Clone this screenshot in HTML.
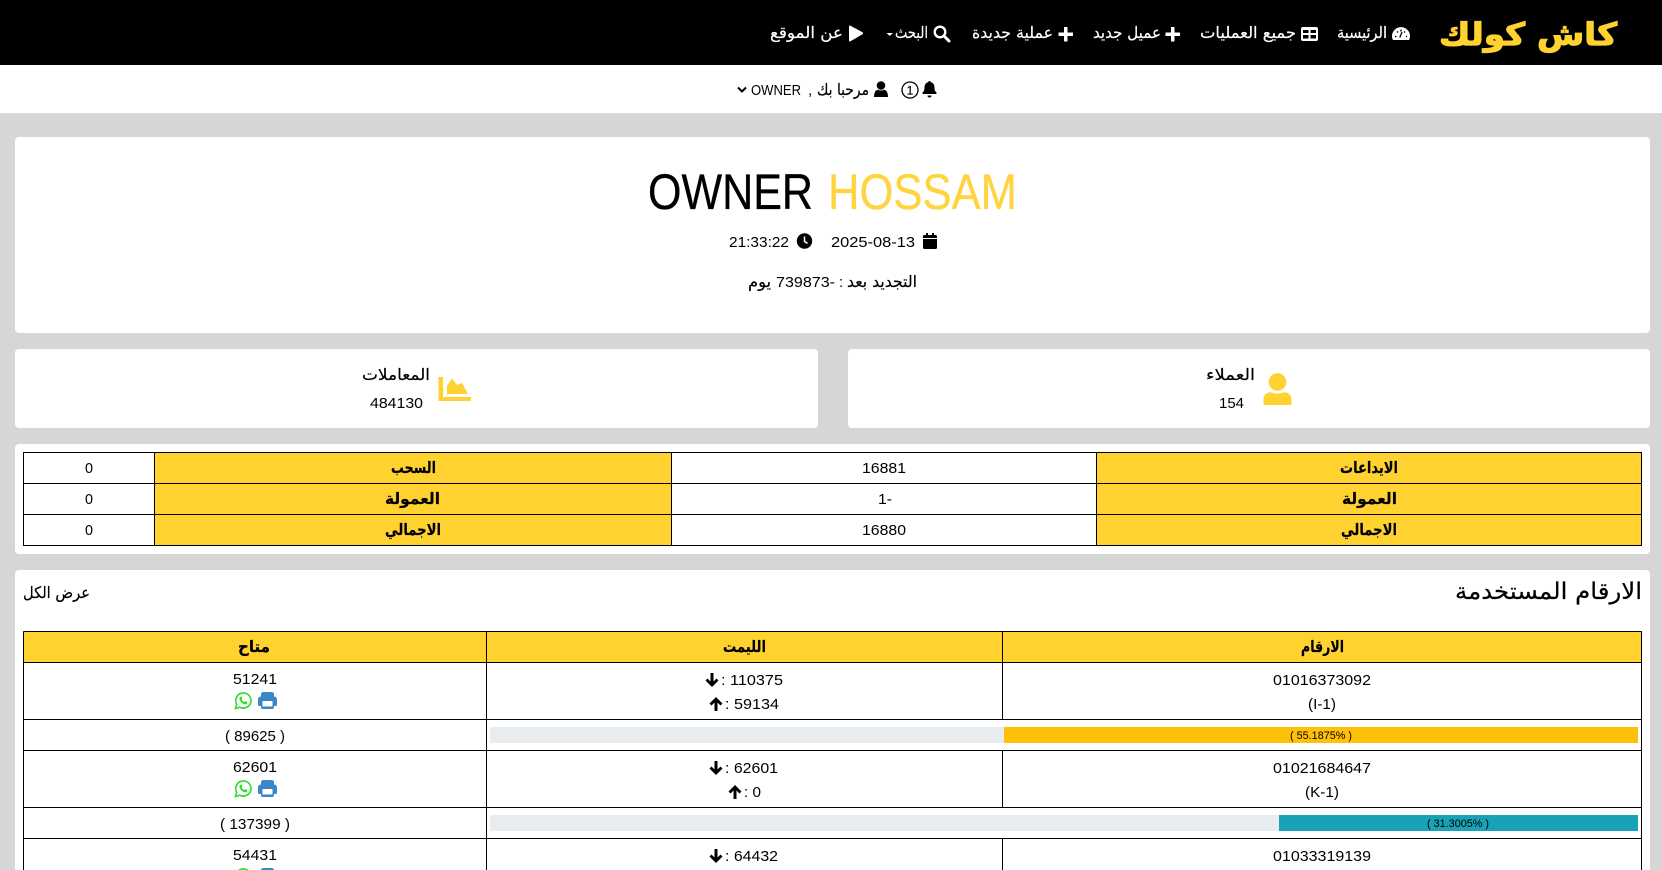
<!DOCTYPE html>
<html lang="ar">
<head>
<meta charset="utf-8">
<title>كاش كولك</title>
<style>
html,body{margin:0;padding:0;width:1662px;height:870px;overflow:hidden;background:#d6d6d6}
svg{position:absolute;left:0;top:0;display:block}
text{font-family:"Liberation Sans","DejaVu Sans",sans-serif;font-size:15px;fill:#000}
.ar{font-family:"DejaVu Sans","Liberation Sans",sans-serif;font-size:16px;stroke:#000;stroke-width:.2}
.b{font-weight:bold;font-size:16px}
.w{fill:#fff;stroke:#fff}
.s{font-size:11px}
</style>
</head>
<body>
<svg width="1662" height="870" viewBox="0 0 1662 870" xmlns="http://www.w3.org/2000/svg">
<!-- bars -->
<rect x="0" y="0" width="1662" height="65" fill="#000"/>
<rect x="0" y="65" width="1662" height="48" fill="#fff"/>
<!-- cards -->
<rect x="15" y="137" width="1635" height="196" rx="4" fill="#fff"/>
<rect x="15" y="349" width="803" height="79" rx="4" fill="#fff"/>
<rect x="848" y="349" width="802" height="79" rx="4" fill="#fff"/>
<rect x="15" y="444" width="1635" height="110" rx="4" fill="#fff"/>
<rect x="15" y="570" width="1635" height="310" rx="4" fill="#fff"/>

<!-- NAV -->
<text class="ar b" x="1439" y="45" textLength="178" lengthAdjust="spacingAndGlyphs" style="font-size:31px;fill:#ffd22f;stroke:#ffd22f;stroke-width:1.200">كاش كولك</text>
<path d="M1392.900 40A9 9 0 1 1 1409.100 40Z" fill="#fff"/>
<path d="M1395 36.500h1.500M1397 31.500l1 1M1401 29.500v2M1405 31.500l-1 1M1407 36.500h-1M1399.800 37.500l2.200-5.500" stroke="#000" stroke-width="1.300" fill="none"/>
<text class="ar w" x="1337" y="38" textLength="50" lengthAdjust="spacingAndGlyphs">الرئيسية</text>
<rect x="1301" y="27" width="17" height="14" rx="2" fill="#fff"/>
<path d="M1303 30h5.500v3h-5.500zM1310.500 30h5.500v3h-5.500zM1303 35h5.500v3.500h-5.500zM1310.500 35h5.500v3.500h-5.500z" fill="#000"/>
<text class="ar w" x="1200" y="38" textLength="96" lengthAdjust="spacingAndGlyphs">جميع العمليات</text>
<path d="M1171 27h3.500v5.500h5.500v3.500h-5.500v5.500h-3.500v-5.500h-5.500v-3.500h5.500z" fill="#fff"/>
<text class="ar w" x="1093" y="38" textLength="68" lengthAdjust="spacingAndGlyphs">عميل جديد</text>
<path d="M1064 27h3.500v5.500h5.500v3.500h-5.500v5.500h-3.500v-5.500h-5.500v-3.500h5.500z" fill="#fff"/>
<text class="ar w" x="972" y="38" textLength="81" lengthAdjust="spacingAndGlyphs">عملية جديدة</text>
<circle cx="940" cy="32" r="5.300" fill="none" stroke="#fff" stroke-width="2.400"/>
<path d="M944 36l5 5" stroke="#fff" stroke-width="3" stroke-linecap="round"/>
<text class="ar w" x="895" y="38" textLength="33" lengthAdjust="spacingAndGlyphs">البحث</text>
<path d="M886.500 33h6.500l-3.250 3z" fill="#fff"/>
<path d="M849 26.500q0-1.500 1.500-.7l12 6.500q1.200 1 0 2l-12 7q-1.500 .7-1.500-.7z" fill="#fff"/>
<text class="ar w" x="770" y="38" textLength="73" lengthAdjust="spacingAndGlyphs">عن الموقع</text>

<!-- SUBBAR -->
<path d="M929.500 81a1.300 1.300 0 0 1 1.300 1.300c2.700.6 3.700 2.800 3.700 5.500c0 2.700 1 3.800 2 5c.4.600 0 1.200-.6 1.200h-12.800c-.6 0-1-.6-.6-1.200c1-1.200 2-2.300 2-5c0-2.700 1-4.900 3.700-5.500a1.300 1.300 0 0 1 1.300-1.300zM927.500 95.500h4a2 2 0 0 1-4 0z" fill="#000"/>
<circle cx="910" cy="90" r="8" fill="none" stroke="#000" stroke-width="1.300"/>
<text x="910" y="94.500" text-anchor="middle" style="font-size:12px;stroke:#000;stroke-width:.2">1</text>
<circle cx="881" cy="85.500" r="4.300" fill="#000"/>
<path d="M874 97c0-5 2-7 4-7.200c2 1 4 1 6 0c2 .2 4 2.200 4 7.200z" fill="#000"/>
<text class="ar" x="817" y="95" textLength="52" lengthAdjust="spacingAndGlyphs">مرحبا بك</text>
<text x="808" y="95">,</text>
<text x="751" y="95" textLength="50" lengthAdjust="spacingAndGlyphs">OWNER</text>
<path d="M738 87.500l4 4l4-4" fill="none" stroke="#000" stroke-width="2"/>

<!-- HERO -->
<text x="648" y="209" textLength="165" lengthAdjust="spacingAndGlyphs" style="font-size:50px;stroke:#000;stroke-width:.3">OWNER</text>
<text x="828" y="209" textLength="189" lengthAdjust="spacingAndGlyphs" style="font-size:50px;fill:#ffd43f;stroke:#ffd43f;stroke-width:.3">HOSSAM</text>
<path d="M923 239h14v8.500a1.500 1.500 0 0 1-1.500 1.500h-11a1.500 1.500 0 0 1-1.500-1.500zM924.500 235h1.500v-2h2v2h4v-2h2v2h1.500a1.500 1.500 0 0 1 1.500 1.500v1.500h-14v-1.500a1.500 1.500 0 0 1 1.500-1.500z" fill="#000"/>
<text x="831" y="247" textLength="84" lengthAdjust="spacingAndGlyphs">2025-08-13</text>
<circle cx="804.500" cy="241" r="7.700" fill="#000"/>
<path d="M804.500 236.500v5l3 2" fill="none" stroke="#fff" stroke-width="1.500"/>
<text x="729" y="247" textLength="60" lengthAdjust="spacingAndGlyphs">21:33:22</text>
<text class="ar" x="847" y="287" textLength="70" lengthAdjust="spacingAndGlyphs">التجديد بعد</text>
<text x="839" y="287">:</text>
<text x="776" y="287" textLength="59" lengthAdjust="spacingAndGlyphs">739873-</text>
<text class="ar" x="748" y="287" textLength="23" lengthAdjust="spacingAndGlyphs">يوم</text>

<!-- STATS -->
<text class="ar" x="362" y="380" textLength="68" lengthAdjust="spacingAndGlyphs">المعاملات</text>
<text x="370" y="408" textLength="53" lengthAdjust="spacingAndGlyphs">484130</text>
<path d="M438.500 377h4.500v20h28v4h-32.500zM447 394v-8l5-7.500l5 6.500l5-2l6 11z" fill="#ffd22f"/>
<text class="ar" x="1206" y="380" textLength="49" lengthAdjust="spacingAndGlyphs">العملاء</text>
<text x="1219" y="408" textLength="25" lengthAdjust="spacingAndGlyphs">154</text>
<circle cx="1277.500" cy="382" r="8.800" fill="#ffd22f"/>
<path d="M1263.500 405v-5c0-5 3-7.500 7-7.700c4.500 1.700 9.500 1.700 14 0c4 .2 7 2.700 7 7.700v5z" fill="#ffd22f"/>

<!-- TABLE 1 -->
<g fill="#ffd22f">
<rect x="154" y="452" width="517" height="93"/>
<rect x="1096" y="452" width="545" height="93"/>
</g>
<g stroke="#000" stroke-width="1" fill="none" shape-rendering="crispEdges">
<path d="M23.500 452.500H1641.500V545.500H23.500zM23.500 483.500H1641.500M23.500 514.500H1641.500M154.500 452.500V545.500M671.500 452.500V545.500M1096.500 452.500V545.500"/>
</g>
<text x="85" y="473" textLength="8" lengthAdjust="spacingAndGlyphs">0</text>
<text x="85" y="504" textLength="8" lengthAdjust="spacingAndGlyphs">0</text>
<text x="85" y="535" textLength="8" lengthAdjust="spacingAndGlyphs">0</text>
<text class="ar b" x="391" y="473" textLength="45" lengthAdjust="spacingAndGlyphs">السحب</text>
<text class="ar b" x="385" y="504" textLength="55" lengthAdjust="spacingAndGlyphs">العمولة</text>
<text class="ar b" x="385" y="535" textLength="56" lengthAdjust="spacingAndGlyphs">الاجمالي</text>
<text x="862" y="473" textLength="44" lengthAdjust="spacingAndGlyphs">16881</text>
<text x="878" y="504" textLength="14" lengthAdjust="spacingAndGlyphs">1-</text>
<text x="862" y="535" textLength="44" lengthAdjust="spacingAndGlyphs">16880</text>
<text class="ar b" x="1340" y="473" textLength="58" lengthAdjust="spacingAndGlyphs">الايداعات</text>
<text class="ar b" x="1342" y="504" textLength="55" lengthAdjust="spacingAndGlyphs">العمولة</text>
<text class="ar b" x="1341" y="535" textLength="56" lengthAdjust="spacingAndGlyphs">الاجمالي</text>

<!-- NUMBERS CARD -->
<text class="ar" x="1455" y="599" textLength="187" lengthAdjust="spacingAndGlyphs" style="font-size:23px">الارقام المستخدمة</text>
<text class="ar" x="23" y="598" textLength="67" lengthAdjust="spacingAndGlyphs">عرض الكل</text>

<rect x="23" y="631" width="1618" height="31" fill="#ffd22f"/>
<!-- progress -->
<rect x="490" y="727" width="1148" height="16" fill="#e9ecef"/>
<rect x="1004" y="727" width="634" height="16" fill="#ffc107"/>
<rect x="490" y="815" width="1148" height="16" fill="#e9ecef"/>
<rect x="1279" y="815" width="359" height="16" fill="#17a2b8"/>
<g stroke="#000" stroke-width="1" fill="none" shape-rendering="crispEdges">
<path d="M23.500 631.500H1641.500V880M23.500 631.500V880M23.500 662.500H1641.500M23.500 719.500H1641.500M23.500 750.500H1641.500M23.500 807.500H1641.500M23.500 838.500H1641.500M486.500 631.500V880M1002.500 631.500V719.500M1002.500 750.500V807.500M1002.500 838.500V880"/>
</g>
<text class="ar b" x="238" y="652" textLength="32" lengthAdjust="spacingAndGlyphs">متاح</text>
<text class="ar b" x="723" y="652" textLength="43" lengthAdjust="spacingAndGlyphs">الليمت</text>
<text class="ar b" x="1301" y="652" textLength="43" lengthAdjust="spacingAndGlyphs">الارقام</text>

<defs>
<g id="wa"><path d="M1 16.500l1.200-4.300a7.600 7.600 0 1 1 3 3z" fill="none" stroke="#2edb2e" stroke-width="1.600"/><path d="M6 4.800c-1.700 1-1.200 3.400.8 5.500c2 2 4.200 2.700 5.700 1.400l.3-1.500l-2.200-1.100l-1 .9c-1.100-.5-2.100-1.600-2.500-2.700l.8-.9l-.9-2.200z" fill="#2edb2e"/></g>
<g id="pr"><path d="M3 4.500V2.500q0-2.500 2.500-2.500h8q2.500 0 2.500 2.500v2q3 .3 3 3v5q0 1.500-1.500 1.500h-1.500v1q0 2-2 2h-9q-2 0-2-2v-1h-1.500q-1.500 0-1.500-1.500v-5q0-2.700 3-3z" fill="#3a87c9"/><rect x="4.500" y="9" width="10" height="5.500" rx=".5" fill="#fff"/></g>
<path id="dn" d="M-1.500 0h3v8.500l3-3l2 2l-6.500 6.500l-6.500-6.500l2-2l3 3z" fill="#000"/>
<path id="up" d="M-1.500 14h3v-8.500l3 3l2-2l-6.500-6.500l-6.500 6.500l2 2l3-3z" fill="#000"/>
</defs>

<!-- row 1 -->
<text x="233" y="684" textLength="44" lengthAdjust="spacingAndGlyphs">51241</text>
<use href="#wa" x="234.500" y="692"/><use href="#pr" x="258" y="692"/>
<use href="#dn" x="712" y="673"/>
<text x="721" y="685" textLength="62" lengthAdjust="spacingAndGlyphs">: 110375</text>
<use href="#up" x="716" y="697"/>
<text x="725" y="709" textLength="54" lengthAdjust="spacingAndGlyphs">: 59134</text>
<text x="1273" y="685" textLength="98" lengthAdjust="spacingAndGlyphs">01016373092</text>
<text x="1308" y="709" textLength="28" lengthAdjust="spacingAndGlyphs">(I-1)</text>
<text x="225" y="741" textLength="60" lengthAdjust="spacingAndGlyphs">( 89625 )</text>
<text class="s" x="1290" y="739" textLength="62" lengthAdjust="spacingAndGlyphs">( 55.1875% )</text>
<!-- row 2 -->
<text x="233" y="772" textLength="44" lengthAdjust="spacingAndGlyphs">62601</text>
<use href="#wa" x="234.500" y="780"/><use href="#pr" x="258" y="780"/>
<use href="#dn" x="716" y="761"/>
<text x="725" y="773" textLength="53" lengthAdjust="spacingAndGlyphs">: 62601</text>
<use href="#up" x="735" y="785"/>
<text x="744" y="797" textLength="17" lengthAdjust="spacingAndGlyphs">: 0</text>
<text x="1273" y="773" textLength="98" lengthAdjust="spacingAndGlyphs">01021684647</text>
<text x="1305" y="797" textLength="34" lengthAdjust="spacingAndGlyphs">(K-1)</text>
<text x="220" y="829" textLength="70" lengthAdjust="spacingAndGlyphs">( 137399 )</text>
<text class="s" x="1427" y="827" textLength="62" lengthAdjust="spacingAndGlyphs">( 31.3005% )</text>
<!-- row 3 -->
<text x="233" y="860" textLength="44" lengthAdjust="spacingAndGlyphs">54431</text>
<use href="#wa" x="234.500" y="868"/><use href="#pr" x="258" y="868"/>
<use href="#dn" x="716" y="849"/>
<text x="725" y="861" textLength="53" lengthAdjust="spacingAndGlyphs">: 64432</text>
<text x="1273" y="861" textLength="98" lengthAdjust="spacingAndGlyphs">01033319139</text>
</svg>
</body>
</html>
